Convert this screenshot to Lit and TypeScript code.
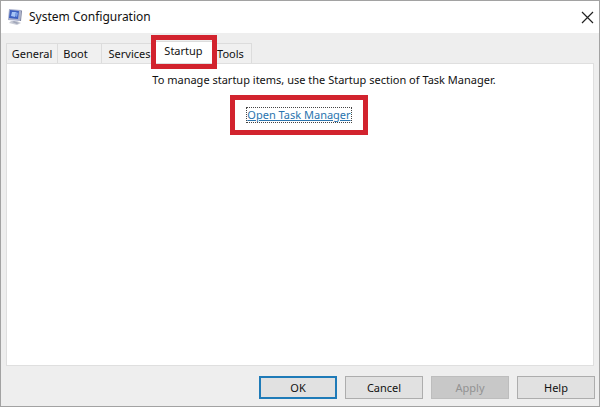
import { LitElement, html, css } from "lit";
import { customElement, state } from "lit/decorators.js";

@customElement("app-root")
export class AppRoot extends LitElement {
  @state() private selected = "Startup";
  private tabs = ["General", "Boot", "Services", "Startup", "Tools"];

  static styles = css`
    :host {
      display: block;
      font: 11px/16px "Noto Sans", "Open Sans", sans-serif;
      color: #111;
    }
    * { box-sizing: border-box; }
    button { font: inherit; color: inherit; margin: 0; }
    .window {
      display: flex;
      flex-direction: column;
      min-height: 100vh;
      background: #eee;
      border: 1px solid #a2a2a2;
    }
    .title {
      display: flex;
      align-items: center;
      height: 32px;
      padding: 0 5px 0 6px;
      gap: 6px;
      background: #fff;
    }
    .title svg { flex: none; }
    .title h1 {
      flex: 1;
      margin: 0;
      font-size: 12px;
      font-weight: 400;
      line-height: 18px;
    }
    .close {
      display: flex;
      padding: 0;
      border: 0;
      background: none;
    }
    .tabs {
      display: grid;
      grid-template-columns: 52px 44px 52px 60px 38px;
      align-items: end;
      padding: 8px 5px 0;
    }
    .tab {
      height: 20px;
      padding: 0;
      border: 1px solid #dcdcdc;
      border-width: 1px 1px 0 0;
      background: #f0f0f0;
      text-align: center;
      white-space: nowrap;
    }
    .tab:first-child { border-left-width: 1px; }
    .tab:nth-child(2) { padding-right: 8px; }
    .tab:nth-child(3) { padding-left: 4px; }
    .tab:nth-child(5) { padding-right: 4px; }
    .tab[aria-selected="true"] {
      position: relative;
      height: 22px;
      padding: 0 0 4px;
      background: #fff;
    }
    .tab[aria-selected="true"]::after {
      content: "";
      position: absolute;
      inset: -7px -4px -6px -3px;
      border: 5px solid #d2232e;
    }
    .panel {
      flex: 1;
      display: flex;
      flex-direction: column;
      align-items: center;
      gap: 7px;
      margin: 0 5px;
      padding: 8px 0 0 48px;
      background: #fff;
      border: 1px solid #dfdfdf;
    }
    .panel p { margin: 0; }
    .mark {
      padding: 8px 12px;
      margin-right: 50px;
      border: 5px solid #d2232e;
    }
    .link {
      display: block;
      color: #2a74ae;
      line-height: 14px;
      text-decoration: underline;
      outline: 1px dotted #444;
    }
    .actions {
      display: flex;
      justify-content: flex-end;
      gap: 8px;
      padding: 10px 4px 7px;
    }
    .action {
      width: 78px;
      height: 23px;
      padding: 0;
      border: 1px solid #adadad;
      background: #e1e1e1;
    }
    .action.primary { border: 2px solid #1f7bb8; }
    .action:disabled {
      color: #929292;
      background: #c8c8c8;
      border-color: #bdbdbd;
    }
  `;

  render() {
    return html`
      <main class="window">
        <header class="title">
          <svg width="16" height="18" viewBox="0 0 16 18" aria-hidden="true">
            <path d="M2 1 14 2 13 13 1 12Z" fill="#a9b0cc" />
            <path d="M3 2 12 3 11 11 2 10Z" fill="#3c5fc0" />
            <path d="M5 4 9 4 8 9 4 8Z" fill="#a5c4f5" />
            <path d="M9 4 11 5 10 9 8 8Z" fill="#7a9fe6" />
            <path d="M14 2 15 3 14 13 13 13Z" fill="#7c84a0" />
            <path d="M4 13 10 13 14 15 10 17 2 15Z" fill="#c9ccd6" />
            <path d="M7 13 12 15 10 16 5 14Z" fill="#a0a6ba" />
          </svg>
          <h1>System Configuration</h1>
          <button class="close" aria-label="Close">
            <svg width="13" height="13" viewBox="0 0 13 13" aria-hidden="true">
              <path d="M1 1 12 12M12 1 1 12" fill="none" stroke="#222" stroke-width="1.2" />
            </svg>
          </button>
        </header>
        <nav class="tabs" role="tablist">
          ${this.tabs.map(
            (name) => html`<button
              class="tab"
              role="tab"
              aria-selected=${name === this.selected ? "true" : "false"}
              @click=${() => (this.selected = name)}
            >${name}</button>`
          )}
        </nav>
        <section class="panel" role="tabpanel">
          <p>To manage startup items, use the Startup section of Task Manager.</p>
          <div class="mark"><a class="link" href="#">Open Task Manager</a></div>
        </section>
        <footer class="actions">
          <button class="action primary">OK</button>
          <button class="action">Cancel</button>
          <button class="action" disabled>Apply</button>
          <button class="action">Help</button>
        </footer>
      </main>
    `;
  }
}
